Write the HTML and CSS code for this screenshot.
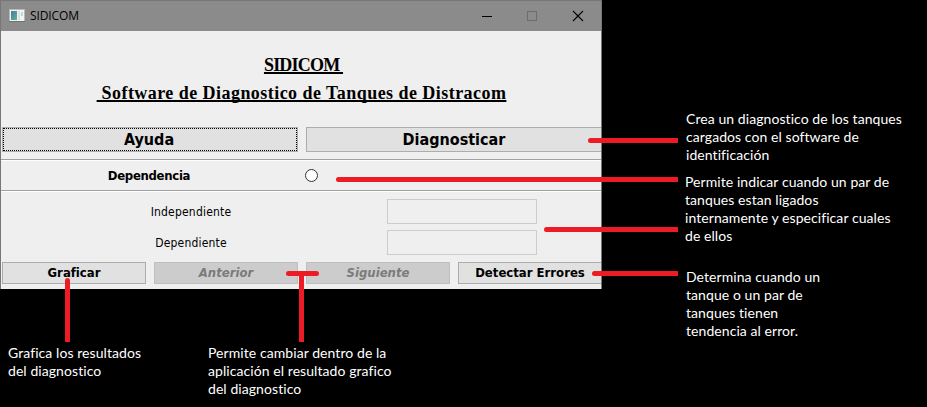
FILE: index.html
```html
<!DOCTYPE html>
<html lang="es">
<head>
<meta charset="utf-8">
<title>SIDICOM</title>
<link rel="stylesheet" href="styles.css">
</head>
<body>
<div class="page">
  <div class="main">
    <section class="window">
      <header class="titlebar">
        <svg class="app-icon" width="16" height="14" viewBox="0 0 16 14">
          <defs><linearGradient id="pane" x1="0" y1="0" x2="1" y2="1"><stop offset="0" stop-color="#4d77a8"/><stop offset="1" stop-color="#5bb58c"/></linearGradient></defs>
          <rect x="0.5" y="0.5" width="15" height="12" fill="#f1f3f4" stroke="#b4b9bd"/>
          <rect x="0" y="12" width="16" height="1" fill="#6d7175"/>
          <rect x="2" y="2" width="6" height="9" fill="url(#pane)"/>
          <rect x="9" y="2" width="2" height="9" fill="#dcdfe3"/>
          <rect x="12" y="3" width="2" height="4" fill="#b9dccb"/>
        </svg>
        <span class="title">SIDICOM</span>
        <svg class="controls" width="102" height="12" viewBox="0 0 102 12" fill="none">
          <path d="M0 6.500H10" stroke="#000"/>
          <rect x="45.500" y="1.500" width="9" height="9" stroke="#6c6c6c"/>
          <path d="M91 1L101 11M101 1L91 11" stroke="#000" stroke-width="1.1"/>
        </svg>
      </header>
      <div class="headings">
        <h1 class="heading short">SIDICOM&nbsp;</h1>
        <h1 class="heading long">&nbsp;Software de Diagnostico de Tanques de Distracom</h1>
      </div>
      <div class="row top-buttons">
        <button class="btn large focused">Ayuda</button>
        <button class="btn large">Diagnosticar</button>
      </div>
      <div class="dependency">
        <span class="dep-label">Dependencia</span>
        <span class="radio"></span>
      </div>
      <div class="fields">
        <label class="field-label">Independiente</label><span class="field"></span>
        <label class="field-label">Dependiente</label><span class="field"></span>
      </div>
      <div class="row bottom-buttons">
        <button class="btn">Graficar</button>
        <button class="btn disabled">Anterior</button>
        <button class="btn disabled">Siguiente</button>
        <button class="btn">Detectar Errores</button>
      </div>
    </section>
    <div class="notes-below">
      <p class="note">Grafica los resultados<br>del diagnostico</p>
      <p class="note">Permite cambiar dentro de la<br>aplicación el resultado grafico<br>del diagnostico</p>
    </div>
  </div>
  <aside class="notes-side">
    <p class="note n1">Crea un diagnostico de los tanques<br>cargados con el software de<br>identificación</p>
    <p class="note n2">Permite indicar cuando un par de<br>tanques estan ligados<br>internamente y especificar cuales<br>de ellos</p>
    <p class="note n3">Determina cuando un<br>tanque o un par de<br>tanques tienen<br>tendencia al error.</p>
  </aside>
  <svg class="pointers" width="927" height="407" viewBox="0 0 927 407">
    <path d="M590.500 140.500H675.500M338.500 179.500H675.500M546.500 229.500H675.500M594.500 273.500H675.500M67.500 280.500V339.500M288.500 273.500H316.500M301.500 273.500V339.500"/>
    <path class="ends" d="M675 140.500H678M675 179.500H678M675 229.500H678M675 273.500H678M67.500 339V342M301.500 339V342"/>
  </svg>
</div>
</body>
</html>
```
FILE: styles.css
```css
* { box-sizing: border-box; }
body { margin: 0; background: #000; overflow: hidden; }
.page { position: relative; display: flex; width: 927px; height: 407px; background: #000; }
.main { width: 602px; flex: none; }
.window {
  width: 602px; height: 289px; overflow: hidden;
  border: 1px solid #777; border-bottom: 0;
  background: #efefef; color: #000;
  font-family: "DejaVu Sans Condensed", "DejaVu Sans", sans-serif;
  font-stretch: condensed;
}
.titlebar { display: flex; align-items: center; height: 30px; padding-left: 8px; background: #8b8b8b; }
.app-icon { flex: none; }
.title { margin-left: 5px; font: 12px/16px "Open Sans", sans-serif; letter-spacing: -0.1px; }
.controls { margin-left: auto; margin-right: 17px; }
.headings { height: 96px; padding-top: 20px; display: flex; flex-direction: column; align-items: center; }
.heading {
  margin: 0; font: bold 18px/28px "Liberation Serif", serif; white-space: nowrap;
  text-decoration: underline; text-decoration-thickness: 2px; text-underline-offset: 1px;
  text-decoration-skip-ink: none;
}
.short { margin-left: 5px; letter-spacing: -0.8px; }
.long { letter-spacing: 0.45px; margin-left: 1px; }
.row { display: flex; gap: 8px; padding-left: 1px; }
.btn {
  flex: none; display: flex; align-items: center; justify-content: center;
  width: 144px; height: 22px; padding: 0; margin: 0;
  border: 1px solid #adadad; background: #e1e1e1; color: #000;
  font: bold 13px/16px "DejaVu Sans Condensed", "DejaVu Sans", sans-serif;
  font-stretch: condensed; white-space: nowrap;
}
.large { width: 296px; height: 25px; font-size: 16px; line-height: 20px; }
.focused { padding-right: 2px; outline: 1px dotted #000; outline-offset: -2px; }
.disabled { background: #ccc; border-color: #bfbfbf; color: #7b7b7b; font-style: italic; }
.dependency {
  display: grid; grid-template-columns: 296px 1fr; column-gap: 8px; align-items: center;
  height: 32px; margin-top: 7px; padding-top: 1px;
  border-top: 1px solid #a0a0a0; border-bottom: 1px solid #a0a0a0;
  box-shadow: inset 0 1px #fff, 0 1px #fff;
}
.dep-label { text-align: center; font-size: 13px; font-weight: bold; letter-spacing: -0.3px; }
.radio { width: 13px; height: 13px; border: 1px solid #333; border-radius: 50%; background: #fff; }
.fields {
  display: grid; grid-template-columns: 380px 150px; grid-auto-rows: 25px; gap: 6px;
  height: 64px; padding-top: 8px; align-items: center;
}
.field-label { text-align: center; font-size: 12px; line-height: 16px; letter-spacing: 0.2px; }
.field { height: 25px; border: 1px solid #ccc; }
.bottom-buttons { margin-top: 7px; }
.note {
  margin: 0; color: #fff; font: 14px/18px Lato, sans-serif; white-space: nowrap;
  font-variant-ligatures: none; letter-spacing: 0.07px;
}
.notes-below { display: grid; grid-template-columns: 200px 1fr; padding: 55px 0 0 8px; }
.notes-side { padding: 110px 0 0 83px; }
.n1 { margin-left: 1px; }
.n2 { margin-top: 9px; }
.n3 { margin: 23px 0 0 1px; }
.pointers { position: absolute; left: 0; top: 0; pointer-events: none; }
.pointers path { fill: none; stroke: #ed1c24; stroke-width: 5; stroke-linecap: round; }
.pointers .ends { stroke-linecap: butt; }
```
